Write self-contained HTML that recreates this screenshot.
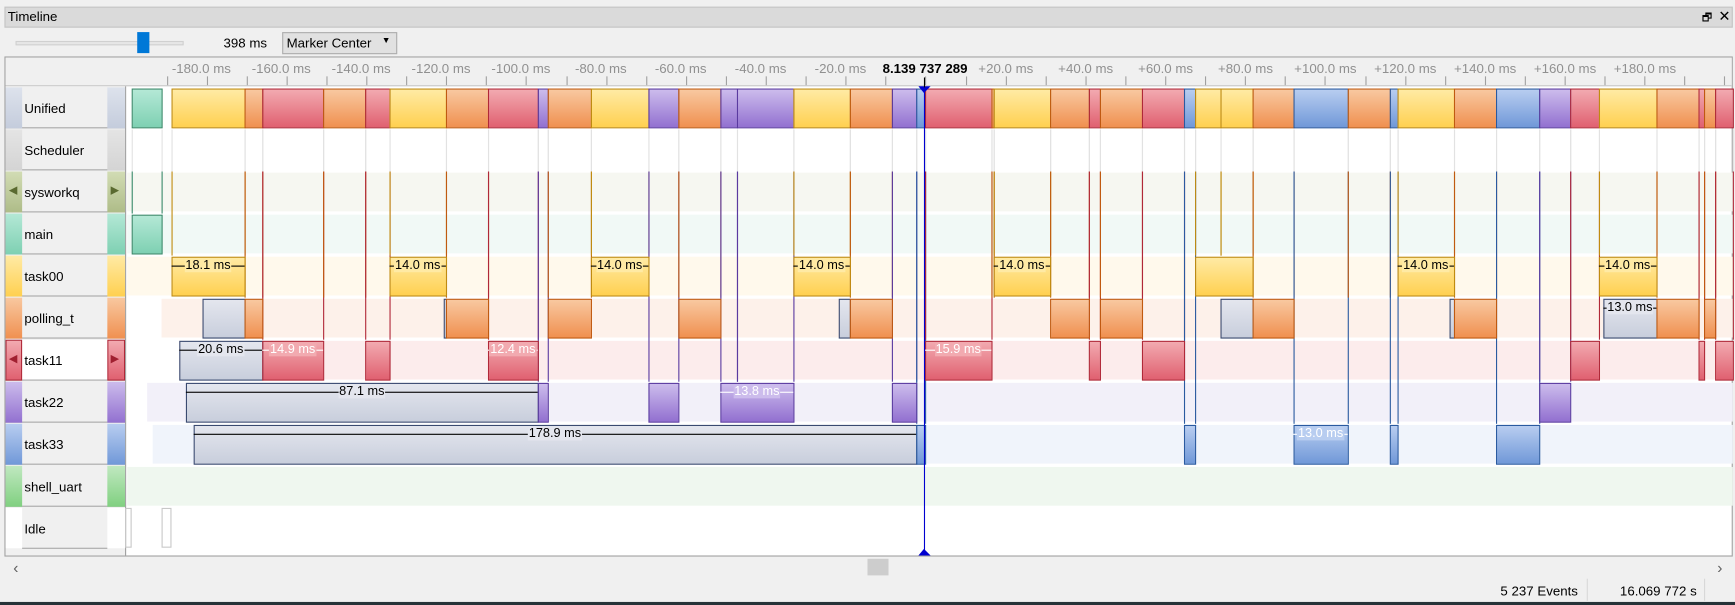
<!DOCTYPE html>
<html><head><meta charset="utf-8"><style>
*{margin:0;padding:0;box-sizing:border-box}
html,body{width:1735px;height:605px;overflow:hidden;background:#f0f0f0;font-family:"Liberation Sans",sans-serif}
#w{position:absolute;left:0;top:0;width:1568px;height:547px;transform:scale(1.10651);transform-origin:0 0;font-size:12px;color:#000}
.a{position:absolute}
.seg{position:absolute;border:1px solid}
.lbl{position:absolute;font-size:11.5px;white-space:nowrap;line-height:12px}
</style></head><body><div id="w">
<div class="a" style="left:4px;top:6px;width:1562px;height:19px;background:#dadada;border:1px solid #c4c4c4"></div>
<div class="a" style="left:7px;top:8px;font-size:12px">Timeline</div>
<div class="a" style="left:1538px;top:9px;font-size:10px">&#x1F5D7;</div>
<div class="a" style="left:1553px;top:7px;font-size:13px">✕</div>
<div class="a" style="left:4px;top:27px;width:1562px;height:24px;background:#f0f0f0"></div>
<div class="a" style="left:14px;top:37px;width:152px;height:4px;background:#e6e6e6;border:1px solid #d0d0d0"></div>
<div class="a" style="left:124px;top:29px;width:11px;height:19px;background:#0078d7"></div>
<div class="a" style="left:202px;top:32px">398 ms</div>
<div class="a" style="left:255px;top:29px;width:104px;height:20px;background:#e1e1e1;border:1px solid #adadad"></div>
<div class="a" style="left:259px;top:32px">Marker Center</div>
<div class="a" style="left:345px;top:32px;font-size:8px">▼</div>
<div class="a" style="left:4px;top:51px;width:1562px;height:452px;background:#fff;border:1px solid #a0a0a0"></div>
<div class="a" style="left:5px;top:52px;width:1560px;height:26px;background:#f0f0f0;border-bottom:1px solid #c8c8c8"></div>
<div class="a" style="left:5px;top:78px;width:109px;height:424px;background:#f0f0f0;border-right:1px solid #a0a0a0"></div>
<div id="g"></div>
<div class="a" style="left:12px;top:505px;font-size:14px;color:#606060">‹</div>
<div class="a" style="left:1552px;top:505px;font-size:14px;color:#606060">›</div>
<div class="a" style="left:784px;top:505px;width:19px;height:15px;background:#cdcdcd"></div>
<div class="a" style="left:1356px;top:527px">5 237 Events</div>
<div class="a" style="left:1434px;top:523px;width:1px;height:20px;background:#d8d8d8"></div>
<div class="a" style="left:1464px;top:527px">16.069 772 s</div>
<div class="a" style="left:1540px;top:523px;width:1px;height:20px;background:#d8d8d8"></div>
<div class="a" style="left:0;top:544px;width:1568px;height:3px;background:#263238"></div>
</div>
<script>
var g=document.getElementById('g'),h='';
function d(s){h+=s}
for(var x=150.5;x<1566;x+=36.1){d('<div class="a" style="left:'+x+'px;top:69px;width:1px;height:8px;background:#a0a0a0"></div>')}
var labs=['-180.0 ms','-160.0 ms','-140.0 ms','-120.0 ms','-100.0 ms','-80.0 ms','-60.0 ms','-40.0 ms','-20.0 ms'];
for(var i=0;i<9;i++){var c=182+i*72.2;d('<div class="a" style="left:'+(c-40)+'px;width:80px;text-align:center;top:55px;color:#909090">'+labs[i]+'</div>')}
var labs2=['+20.0 ms','+40.0 ms','+60.0 ms','+80.0 ms','+100.0 ms','+120.0 ms','+140.0 ms','+160.0 ms','+180.0 ms'];
for(var i=0;i<9;i++){var c=909+i*72.2;d('<div class="a" style="left:'+(c-40)+'px;width:80px;text-align:center;top:55px;color:#909090">'+labs2[i]+'</div>')}
d('<div class="a" style="left:790px;top:55px;width:92px;background:#f0f0f0;font-weight:bold;text-align:center">8.139 737 289</div>');
var C={m:['#b4e8d6','#7ed0b2','#3a8a6a'],y:['#ffeaa4','#ffd050','#c08c10'],o:['#f8c8a0','#f09050','#c05a10'],r:['#f2aab0','#e06070','#b02838'],p:['#ccbcec','#9270d0','#5a3aa0'],b:['#b8cdf0','#7098d8','#2a5aa0'],g:['#e4e6ee','#c8cedc','#3a4a70'],s:['#c0e8c0','#80d080','#40a040']};
var rows=[['Unified','#dde2ec','#c4ccdc'],['Scheduler','#e4e4e4','#d4d4d4'],['sysworkq','#d2dcb4','#aebc88'],['main',C.m[0],C.m[1]],['task00',C.y[0],C.y[1]],['polling_t',C.o[0],C.o[1]],['task11',C.r[0],C.r[1]],['task22',C.p[0],C.p[1]],['task33',C.b[0],C.b[1]],['shell_uart',C.s[0],C.s[1]],['Idle','#fff','#fff']];
var bands=[null,null,[115,'#f6f7f1'],[115,'#f1f9f6'],[115,'#fff9ec'],[146,'#fdf1ea'],[162,'#fcecec'],[133,'#f2f0f9'],[138,'#f0f4fb'],[115,'#eff7ef'],null];
for(var r=0;r<11;r++){var y=79+r*38;var R=rows[r];
 d('<div class="a" style="left:5px;top:'+y+'px;width:108px;height:37px;background:'+(r==6?'#fff':'#f0f0f0')+';border-bottom:1px solid #a8a8a8"></div>');
 d('<div class="a" style="left:5px;top:'+y+'px;width:15px;height:37px;background:linear-gradient('+R[1]+','+R[2]+')'+(r==6?';border:1px solid #b02838':'')+'"></div>');
 d('<div class="a" style="left:97px;top:'+y+'px;width:16px;height:37px;background:linear-gradient('+R[1]+','+R[2]+')'+(r==6?';border:1px solid #b02838':'')+'"></div>');
 d('<div class="a" style="left:22px;top:'+(y+12)+'px">'+R[0]+'</div>');
 if(r==2){d('<div class="a" style="left:8px;top:'+(y+12)+'px;font-size:10px;color:#5a6a30">◀</div><div class="a" style="left:100px;top:'+(y+12)+'px;font-size:10px;color:#5a6a30">▶</div>')}
 if(r==6){d('<div class="a" style="left:8px;top:'+(y+12)+'px;font-size:10px;color:#a02030">◀</div><div class="a" style="left:100px;top:'+(y+12)+'px;font-size:10px;color:#a02030">▶</div>')}
 if(bands[r])d('<div class="a" style="left:'+bands[r][0]+'px;top:'+(y+1)+'px;width:'+(1566-bands[r][0])+'px;height:35px;background:'+bands[r][1]+'"></div>');
}
var RI={m:3,y:4,o:5,r:6,p:7,b:8};
var U=[['m',119,146],['y',155,221],['o',221,237],['r',237,292],['o',292,330],['r',330,352],['y',352,403],['o',403,441],['r',441,486],['p',486,495],['o',495,534],['y',534,586],['p',586,613],['o',613,651],['p',651,666],['p',666,717],['y',717,768],['o',768,806],['p',806,828],['b',828,836],['r',836,896],['o',896,898],['y',898,949],['o',949,984],['r',984,994],['o',994,1032],['r',1032,1070],['b',1070,1080],['y',1080,1103],['y',1103,1132],['o',1132,1169],['b',1169,1218],['o',1218,1256],['b',1256,1263],['y',1263,1314],['o',1314,1352],['b',1352,1391],['p',1391,1419],['r',1419,1445],['y',1445,1497],['o',1497,1535],['r',1535,1540],['o',1540,1550],['r',1550,1566]];
function seg(c,x1,x2,r,lab){var y=79+r*38;var k=C[c];
 d('<div class="seg" style="left:'+x1+'px;top:'+(y+1)+'px;width:'+(x2-x1+1)+'px;height:36px;background:linear-gradient('+k[0]+','+k[1]+');border-color:'+k[2]+'"></div>');
 if(lab){var col=c=='g'||c=='y'?'#000':'#fff';d('<div class="a" style="left:'+x1+'px;top:'+(y+9)+'px;width:'+(x2-x1)+'px;height:1px;background:'+col+'"></div>');
 d('<div class="lbl" style="left:'+x1+'px;width:'+(x2-x1)+'px;text-align:center;top:'+(y+3)+'px"><span style="background:'+(c=='g'?'#e4e6ee':k[0])+';color:'+col+';padding:0 1px">'+lab+'</span></div>')}}
for(var i=0;i<U.length;i++){var u=U[i];var rr=RI[u[0]];[u[1],u[2]].forEach(function(x){
 d('<div class="a" style="left:'+x+'px;top:117px;width:1px;height:38px;background:#e2e2e2"></div>');
 if(rr>2)d('<div class="a" style="left:'+x+'px;top:155px;width:1px;height:'+((rr-2)*38)+'px;background:'+C[u[0]][2]+'"></div>');});}
for(var i=0;i<U.length;i++)seg(U[i][0],U[i][1],U[i][2],0);
var T=[['m',119,146,3],['y',155,221,4,'18.1 ms'],['y',352,403,4,'14.0 ms'],['y',534,586,4,'14.0 ms'],['y',717,768,4,'14.0 ms'],['y',898,949,4,'14.0 ms'],['y',1080,1132,4],['y',1263,1314,4,'14.0 ms'],['y',1445,1497,4,'14.0 ms'],
['g',183,221,5],['o',221,237,5],['g',401,403,5],['o',403,441,5],['o',495,534,5],['o',613,651,5],['g',758,768,5],['o',768,806,5],['o',949,984,5],['o',994,1032,5],['g',1103,1132,5],['o',1132,1169,5],['g',1310,1314,5],['o',1314,1352,5],['g',1449,1497,5,'13.0 ms'],['o',1497,1535,5],['o',1540,1550,5],
['g',162,237,6,'20.6 ms'],['r',237,292,6,'14.9 ms'],['r',330,352,6],['r',441,486,6,'12.4 ms'],['r',836,896,6,'15.9 ms'],['r',984,994,6],['r',1032,1070,6],['r',1419,1445,6],['r',1535,1540,6],['r',1550,1566,6],
['g',168,486,7,'87.1 ms'],['p',486,495,7],['p',586,613,7],['p',651,717,7,'13.8 ms'],['p',806,828,7],['p',1391,1419,7],
['g',175,828,8,'178.9 ms'],['b',828,836,8],['b',1070,1080,8],['b',1169,1218,8,'13.0 ms'],['b',1256,1263,8],['b',1352,1391,8]];
for(var i=0;i<T.length;i++)seg(T[i][0],T[i][1],T[i][2],T[i][3],T[i][4]);
d('<div class="a" style="left:113px;top:459px;width:6px;height:36px;border:1px solid #c8c8c8"></div><div class="a" style="left:146px;top:459px;width:9px;height:36px;border:1px solid #c8c8c8"></div>');
d('<div class="a" style="left:835px;top:78px;width:1px;height:424px;background:#0000d0"></div>');
d('<div class="a" style="left:830px;top:78px;width:0;height:0;border-left:5px solid transparent;border-right:6px solid transparent;border-top:6px solid #0000d0"></div>');
d('<div class="a" style="left:830px;top:496px;width:0;height:0;border-left:5px solid transparent;border-right:6px solid transparent;border-bottom:6px solid #0000d0"></div>');
d('<div class="a" style="left:835px;top:70px;width:1px;height:9px;background:#000"></div>');
g.innerHTML=h;
</script>
</body></html>
